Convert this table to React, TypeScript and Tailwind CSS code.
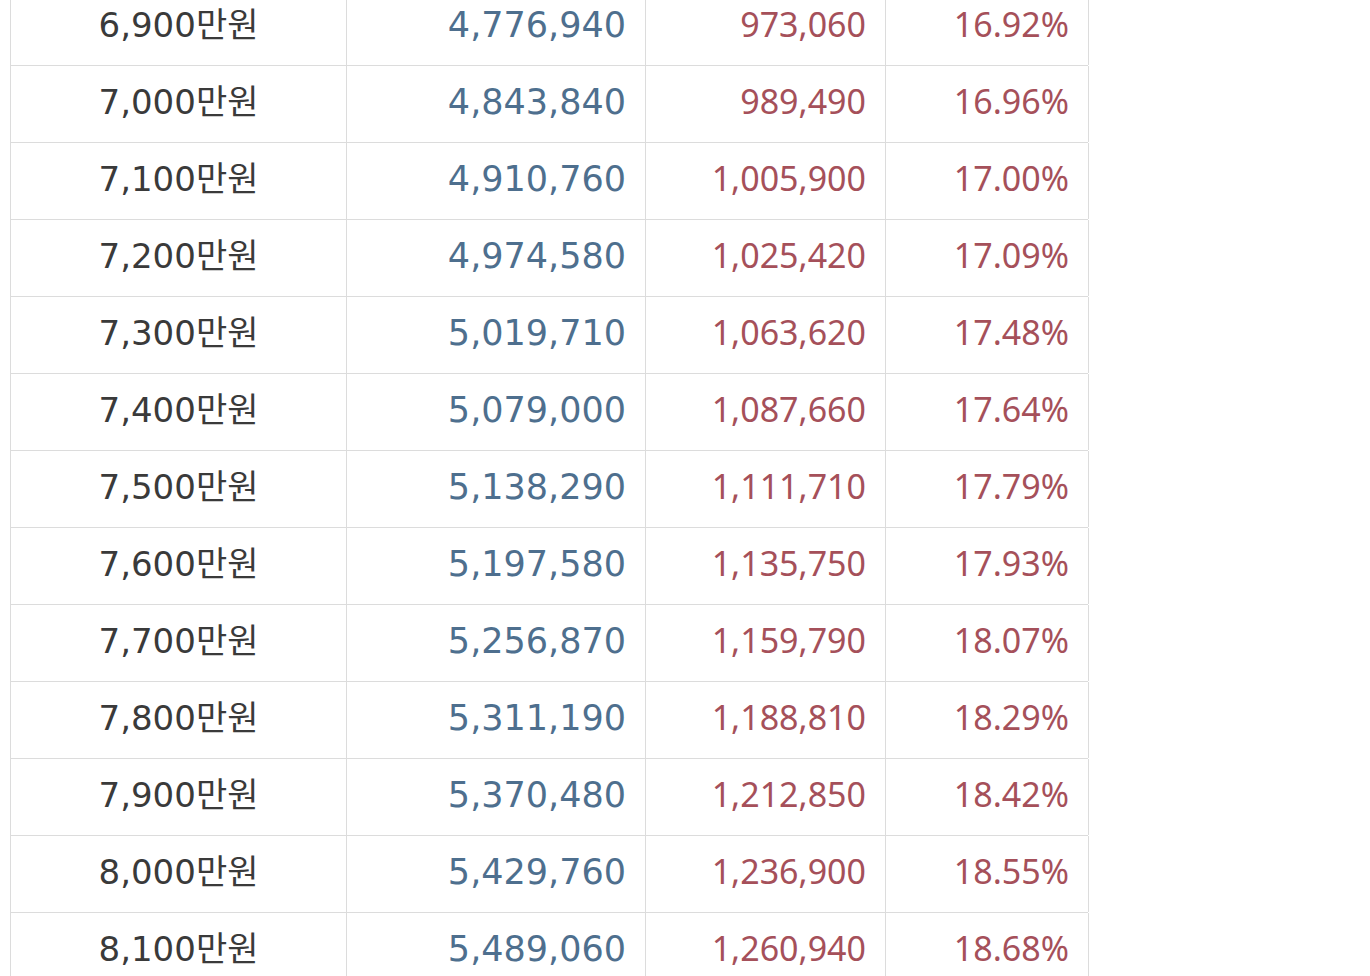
import React from "react";

const rows: [string, string, string, string][] = [
  ["6,900만원", "4,776,940", "973,060", "16.92%"],
  ["7,000만원", "4,843,840", "989,490", "16.96%"],
  ["7,100만원", "4,910,760", "1,005,900", "17.00%"],
  ["7,200만원", "4,974,580", "1,025,420", "17.09%"],
  ["7,300만원", "5,019,710", "1,063,620", "17.48%"],
  ["7,400만원", "5,079,000", "1,087,660", "17.64%"],
  ["7,500만원", "5,138,290", "1,111,710", "17.79%"],
  ["7,600만원", "5,197,580", "1,135,750", "17.93%"],
  ["7,700만원", "5,256,870", "1,159,790", "18.07%"],
  ["7,800만원", "5,311,190", "1,188,810", "18.29%"],
  ["7,900만원", "5,370,480", "1,212,850", "18.42%"],
  ["8,000만원", "5,429,760", "1,236,900", "18.55%"],
  ["8,100만원", "5,489,060", "1,260,940", "18.68%"],
];

const narrow = { fontFamily: '"Noto Sans", "Noto Sans CJK KR", sans-serif' };

export default function App() {
  return (
    <div
      className="w-[1370px] h-[976px] bg-white overflow-hidden pl-[10px]"
      style={{ fontFamily: '"DejaVu Sans", "Noto Sans CJK KR", sans-serif' }}
    >
      <div className="-mt-[11px] w-[1078px] border-l border-[#dcdcdc]">
        {rows.map((r, i) => (
          <div
            key={i}
            className="grid grid-cols-[336px_299px_240px_203px] h-[77px] border-b border-[#dcdcdc] leading-none"
          >
            <div className="flex items-center justify-center pb-[4px] border-r border-[#dcdcdc] text-[34px] text-[#3a3a3a]">
              {r[0]}
            </div>
            <div className="flex items-center justify-end pb-[4px] pr-[19px] border-r border-[#dcdcdc] text-[35px] text-[#4e6f8e]">
              {r[1]}
            </div>
            <div
              className="flex items-center justify-end pb-[7px] pr-[19px] border-r border-[#dcdcdc] text-[34px] text-[#a5505a]"
              style={narrow}
            >
              {r[2]}
            </div>
            <div
              className="flex items-center justify-end pb-[7px] pr-[19px] border-r border-[#dcdcdc] text-[34px] text-[#a5505a]"
              style={narrow}
            >
              {r[3]}
            </div>
          </div>
        ))}
      </div>
    </div>
  );
}
